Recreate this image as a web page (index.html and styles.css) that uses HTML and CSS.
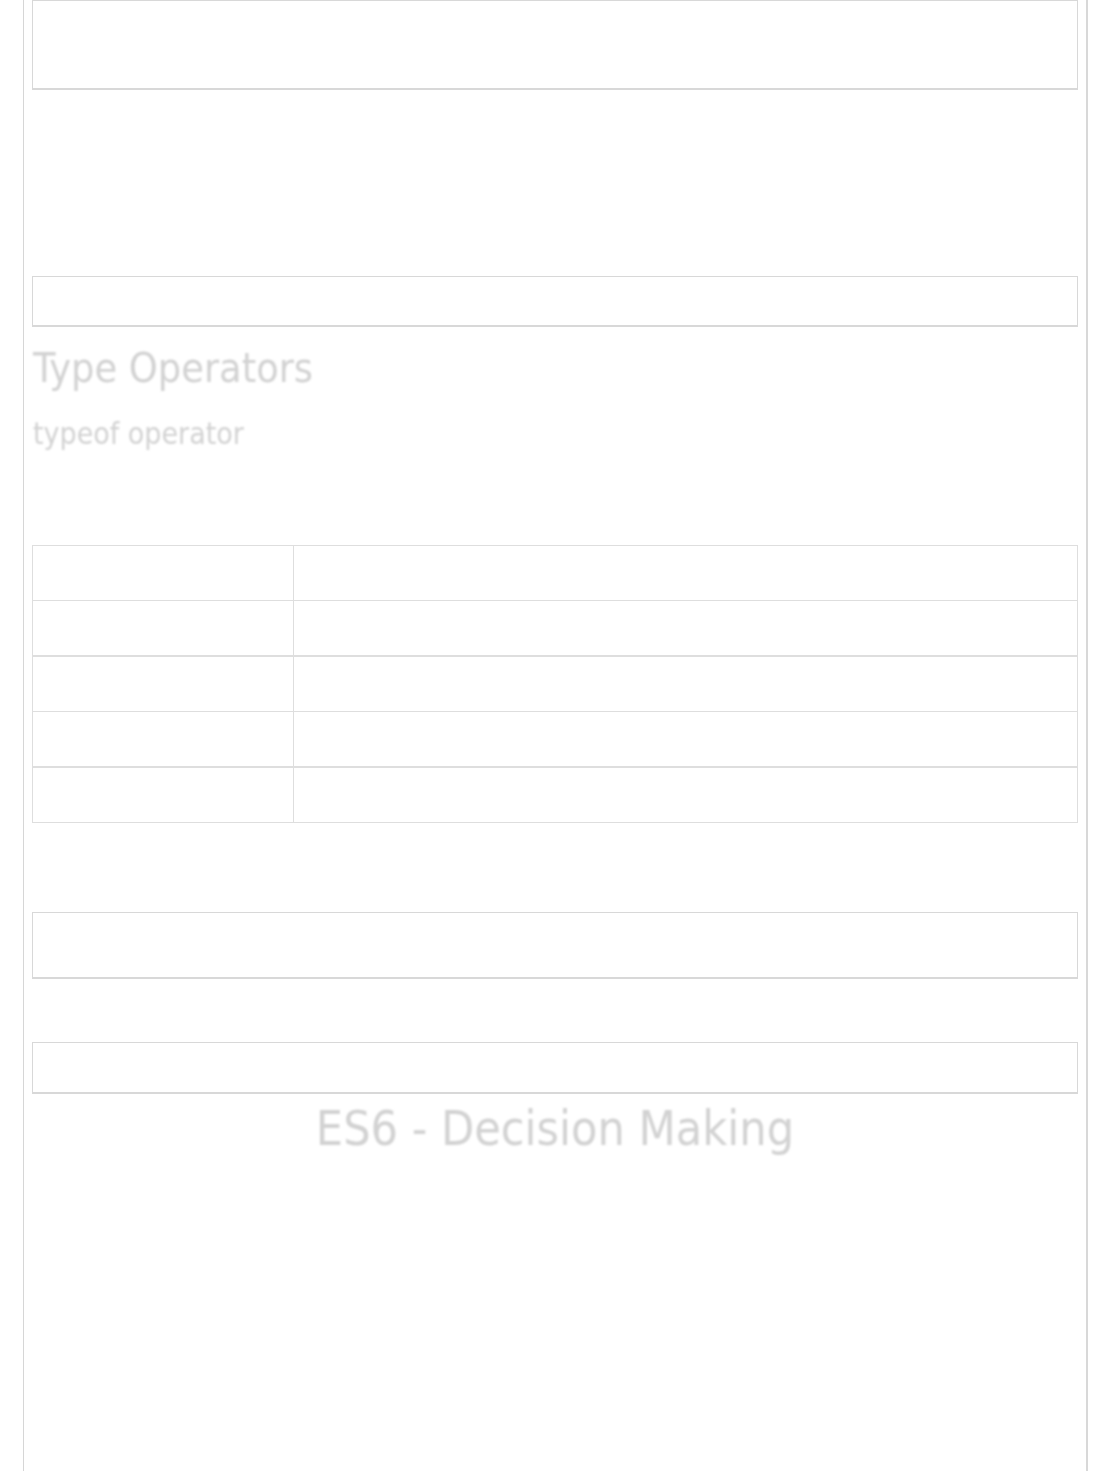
FILE: index.html
```html
<!DOCTYPE html>
<html lang="en">
<head>
<meta charset="utf-8">
<title>ES6 - Operators</title>
<link rel="stylesheet" href="styles.css">
</head>
<body>
<div class="page">
  <div class="box box-top"></div>
  <div class="spacer spacer-a"></div>
  <div class="box box-b"></div>
  <h2 class="heading-2">Type Operators</h2>
  <h3 class="heading-3">typeof operator</h3>
  <div class="spacer spacer-b"></div>
  <table class="grid">
    <tbody>
      <tr><td class="c1"></td><td class="c2"></td></tr>
      <tr><td class="c1"></td><td class="c2"></td></tr>
      <tr><td class="c1"></td><td class="c2"></td></tr>
      <tr><td class="c1"></td><td class="c2"></td></tr>
      <tr><td class="c1"></td><td class="c2"></td></tr>
    </tbody>
  </table>
  <div class="box box-c"></div>
  <div class="box box-d"></div>
  <h1 class="heading-1">ES6 - Decision Making</h1>
</div>
</body>
</html>
```

FILE: styles.css
```css
html, body {
  margin: 0;
  padding: 0;
  background: #ffffff;
}

body {
  font-family: "DejaVu Sans Condensed", "DejaVu Sans", sans-serif;
  color: #d2d2d2;
}

.page {
  box-sizing: border-box;
  margin-left: 23px;
  width: 1065px;
  min-height: 1471px;
  border-left: 1px solid #d6d6d6;
  border-right: 2px solid #d8d8d8;
  padding: 0 8px 0 8px;
  display: flex;
  flex-direction: column;
}

.box {
  box-sizing: border-box;
  border: 1px solid #d8d8d8;
  border-bottom-width: 2px;
  background: #ffffff;
}

.box-top {
  height: 90px;
}

.spacer-a {
  height: 186px;
}

.box-b {
  height: 51px;
}

.heading-2 {
  margin: 17px 0 0 1px;
  font-size: 41px;
  line-height: 48px;
  font-weight: normal;
  filter: blur(1.2px);
}

.heading-3 {
  margin: 24px 0 0 1px;
  font-size: 30px;
  line-height: 36px;
  font-weight: normal;
  filter: blur(1.2px);
}

.spacer-b {
  height: 93px;
}

.grid {
  width: 100%;
  border-collapse: collapse;
  border: 1px solid #dcdcdc;
}

.grid td {
  border: 1px solid #dedede;
  height: 54px;
  padding: 0;
}

.grid tr:nth-child(2) td,
.grid tr:nth-child(4) td {
  border-bottom-width: 2px;
}

.grid .c1 {
  width: 260px;
}

.box-c {
  margin-top: 89px;
  height: 67px;
}

.box-d {
  margin-top: 63px;
  height: 52px;
}

.heading-1 {
  margin: 5px 0 0 0;
  font-size: 48px;
  line-height: 58px;
  font-weight: normal;
  text-align: center;
  filter: blur(1.2px);
}
```
